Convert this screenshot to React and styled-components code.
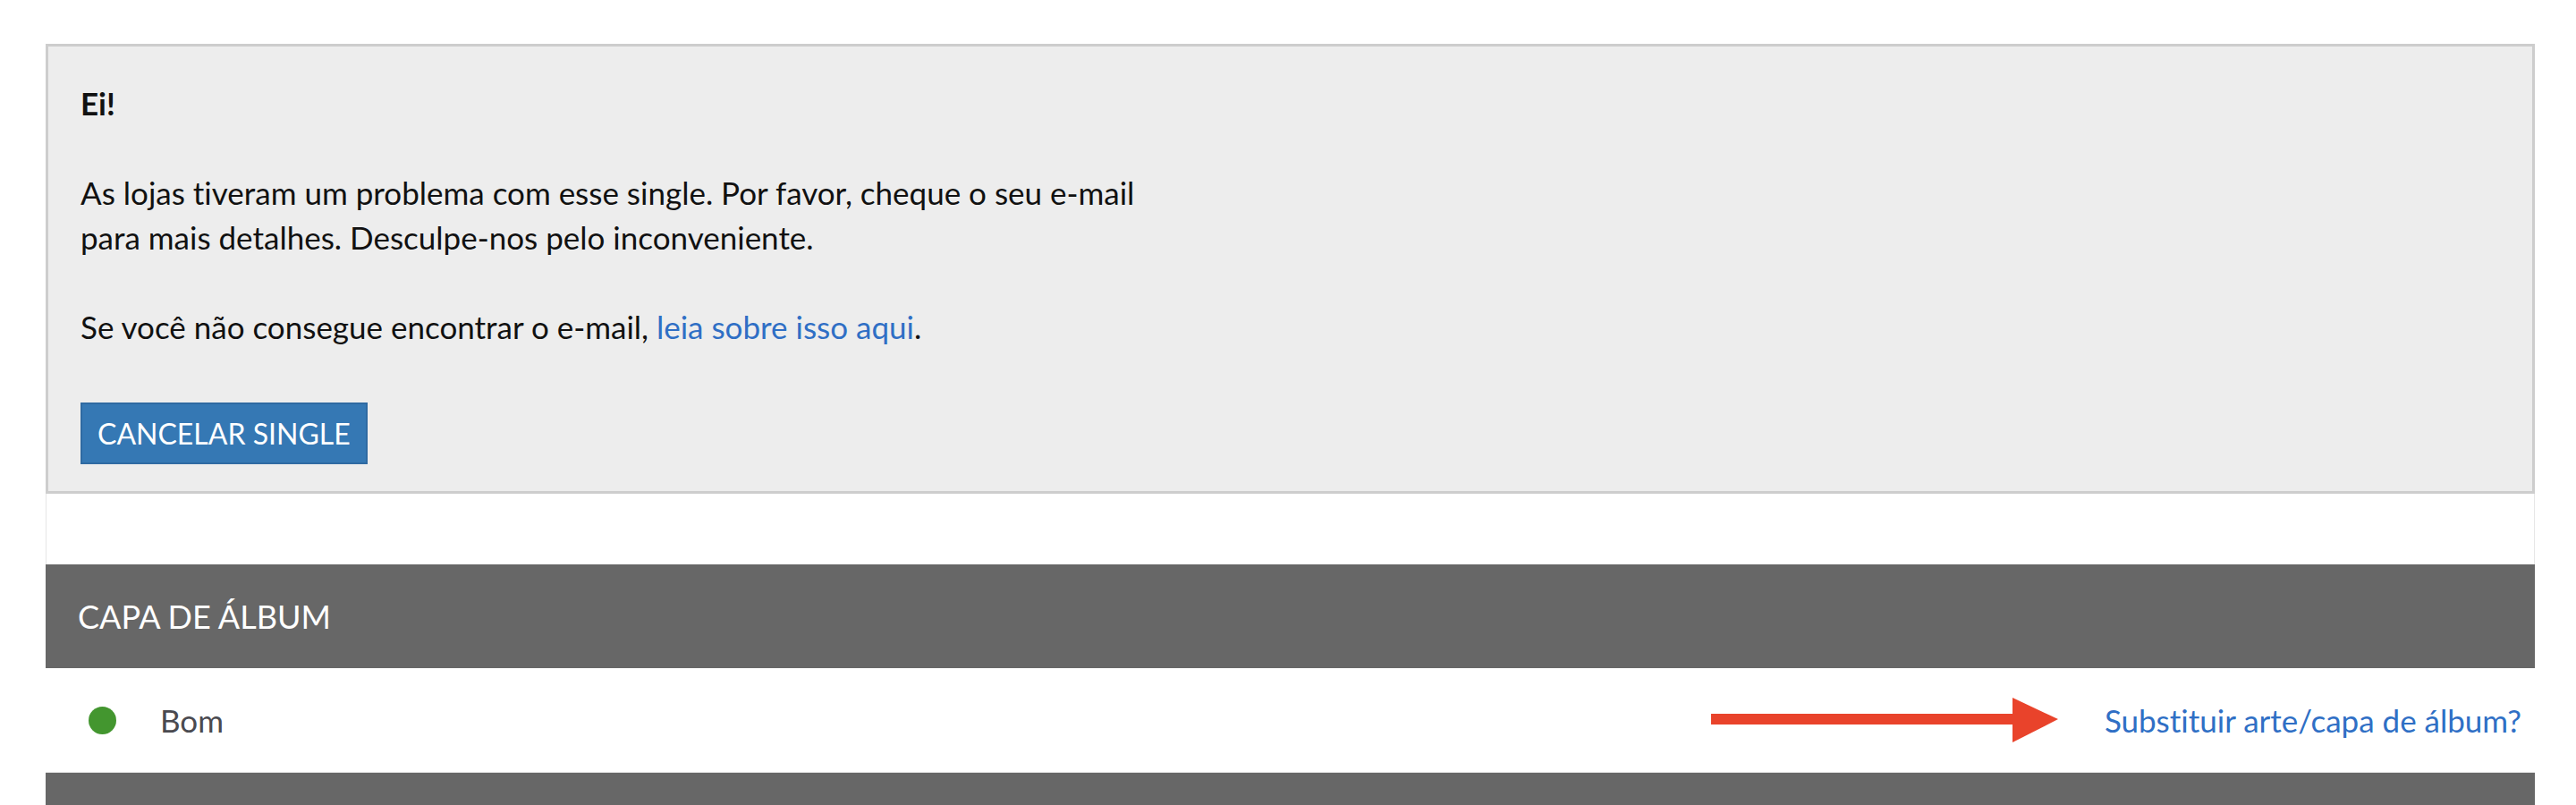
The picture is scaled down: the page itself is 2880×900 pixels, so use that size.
import React from "react";
import styled, { createGlobalStyle } from "styled-components";

const GlobalStyle = createGlobalStyle`
  body {
    margin: 0;
    background: #fff;
    font-family: Lato, "Open Sans", sans-serif;
    font-variant-ligatures: none;
    color: #111;
  }
`;

const Page = styled.div`
  padding: 49px 46px 0 51px;
`;

const Alert = styled.div`
  background: #ededed;
  border: 3px solid #cdcdcd;
  padding: 38px 36px 30px;
  font-size: 35px;
  line-height: 50px;
`;

const Title = styled.p`
  margin: 0 0 50px;
  font-weight: 700;
`;

const Text = styled.p`
  margin: 0 0 ${(p) => p.$gap || 50}px;
`;

const Link = styled.a`
  color: #2f6fc5;
  text-decoration: none;
  cursor: pointer;
`;

const Button = styled.button`
  display: inline-flex;
  align-items: center;
  box-sizing: border-box;
  height: 69px;
  padding: 0 17px;
  background: #3578b4;
  border: 2px solid #2f6aa2;
  color: #fff;
  font-family: Lato, "Open Sans", sans-serif;
  font-variant-ligatures: none;
  font-size: 32px;
  text-transform: uppercase;
  cursor: pointer;
`;

const Spacer = styled.div`
  height: 79px;
  border-left: 1px solid #e6e6e6;
  border-right: 1px solid #e6e6e6;
`;

const SectionHeader = styled.div`
  background: #676767;
  color: #fff;
  height: ${(p) => p.$height || 116}px;
  line-height: 116px;
  padding: 0 36px;
  font-size: 36px;
  text-transform: uppercase;
`;

const Row = styled.div`
  display: flex;
  align-items: center;
  justify-content: space-between;
  height: 116px;
  padding: 0 15px 0 48px;
  border-bottom: 1px solid #e2e2e2;
  font-size: 35px;
`;

const Status = styled.div`
  display: flex;
  align-items: center;
  gap: 49px;
  color: #4a4a50;
`;

const Dot = styled.span`
  width: 31px;
  height: 31px;
  border-radius: 50%;
  background: ${(p) => p.$color};
`;

const Action = styled.div`
  display: flex;
  align-items: center;
  gap: 52px;
`;

function Arrow() {
  return (
    <svg width="388" height="50" viewBox="0 0 388 50">
      <rect x="0" y="18" width="340" height="12" fill="#e9432b" />
      <polygon points="337,0 388,24 337,50" fill="#e9432b" />
    </svg>
  );
}

export default function App() {
  return (
    <>
      <GlobalStyle />
      <Page>
        <Alert>
          <Title>Ei!</Title>
          <Text>
            As lojas tiveram um problema com esse single. Por favor, cheque o seu e-mail
            <br />
            para mais detalhes. Desculpe-nos pelo inconveniente.
          </Text>
          <Text $gap={60}>
            Se você não consegue encontrar o e-mail, <Link>leia sobre isso aqui</Link>.
          </Text>
          <Button>Cancelar single</Button>
        </Alert>
        <Spacer />
        <SectionHeader>Capa de álbum</SectionHeader>
        <Row>
          <Status>
            <Dot $color="#43962f" />
            Bom
          </Status>
          <Action>
            <Arrow />
            <Link>Substituir arte/capa de álbum?</Link>
          </Action>
        </Row>
        <SectionHeader $height={60} />
      </Page>
    </>
  );
}
